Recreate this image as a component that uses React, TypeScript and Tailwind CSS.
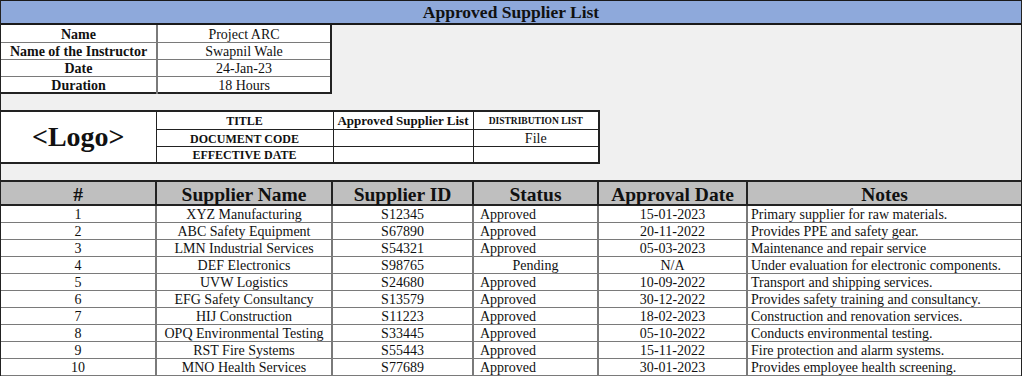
import React from "react";

const info = [
  { label: "Name", value: "Project ARC" },
  { label: "Name of the Instructor", value: "Swapnil Wale" },
  { label: "Date", value: "24-Jan-23" },
  { label: "Duration", value: "18 Hours" },
];

const suppliers = [
  { no: 1, name: "XYZ Manufacturing", id: "S12345", status: "Approved", date: "15-01-2023", notes: "Primary supplier for raw materials." },
  { no: 2, name: "ABC Safety Equipment", id: "S67890", status: "Approved", date: "20-11-2022", notes: "Provides PPE and safety gear." },
  { no: 3, name: "LMN Industrial Services", id: "S54321", status: "Approved", date: "05-03-2023", notes: "Maintenance and repair service" },
  { no: 4, name: "DEF Electronics", id: "S98765", status: "Pending", date: "N/A", notes: "Under evaluation for electronic components." },
  { no: 5, name: "UVW Logistics", id: "S24680", status: "Approved", date: "10-09-2022", notes: "Transport and shipping services." },
  { no: 6, name: "EFG Safety Consultancy", id: "S13579", status: "Approved", date: "30-12-2022", notes: "Provides safety training and consultancy." },
  { no: 7, name: "HIJ Construction", id: "S11223", status: "Approved", date: "18-02-2023", notes: "Construction and renovation services." },
  { no: 8, name: "OPQ Environmental Testing", id: "S33445", status: "Approved", date: "05-10-2022", notes: "Conducts environmental testing." },
  { no: 9, name: "RST Fire Systems", id: "S55443", status: "Approved", date: "15-11-2022", notes: "Fire protection and alarm systems." },
  { no: 10, name: "MNO Health Services", id: "S77689", status: "Approved", date: "30-01-2023", notes: "Provides employee health screening." },
];

export default function App() {
  return (
    <div className="w-[1024px] h-[376px] overflow-hidden bg-white font-['Liberation_Serif',serif] text-[14px] leading-[12px] text-[#111]">
      <div className="w-[1022px] h-[376px] bg-[#f0f0f0] border-x border-b-2 border-[#222] flex flex-col">
        {/* title bar */}
        <div className="h-[25px] shrink-0 bg-[#8ea9db] border-t border-b-2 border-[#1a1a1a] flex items-center justify-center font-bold text-[17.5px]">
          Approved Supplier List
        </div>

        {/* course info */}
        <table className="w-[331px] border-collapse bg-white border-r-2 border-b-2 border-[#222]">
          <tbody>
            {info.map((r) => (
              <tr key={r.label} className="h-[17px]">
                <td className="w-[156px] p-0 pt-[3px] text-center font-bold border-b border-r-2 border-[#7a7a7a]">{r.label}</td>
                <td className="p-0 pt-[3px] text-center border-b border-[#7a7a7a]">{r.value}</td>
              </tr>
            ))}
          </tbody>
        </table>

        {/* document header */}
        <table className="mt-[16px] w-[599px] border-collapse bg-white border-2 border-l-0 border-[#222]">
          <tbody>
            <tr className="h-[18px]">
              <td rowSpan={3} className="w-[155px] p-0 text-center font-bold text-[28px] leading-none border-r border-[#222]">
                &lt;Logo&gt;
              </td>
              <td className="w-[177px] p-0 pt-[2px] text-center font-bold text-[12px] border-r border-b border-[#222]">TITLE</td>
              <td className="w-[140px] p-0 pt-[2px] text-center font-bold text-[13px] border-r border-b border-[#222]">Approved Supplier List</td>
              <td className="p-0 pt-[2px] text-center font-bold text-[9.5px] border-b border-[#222]">DISTRIBUTION LIST</td>
            </tr>
            <tr className="h-[17px]">
              <td className="p-0 pt-[2px] text-center font-bold text-[12px] border-r border-b border-[#222]">DOCUMENT CODE</td>
              <td className="p-0 border-r border-b border-[#222]"></td>
              <td className="p-0 pt-[2px] text-center border-b border-[#222]">File</td>
            </tr>
            <tr className="h-[17px]">
              <td className="p-0 pt-[2px] text-center font-bold text-[12px] border-r border-[#222]">EFFECTIVE DATE</td>
              <td className="p-0 border-r border-[#222]"></td>
              <td className="p-0"></td>
            </tr>
          </tbody>
        </table>

        {/* supplier table */}
        <table className="mt-[16px] w-full border-collapse bg-white border-t-2 border-[#222] table-fixed">
          <colgroup>
            <col className="w-[155px]" />
            <col className="w-[176px]" />
            <col className="w-[141px]" />
            <col className="w-[125px]" />
            <col className="w-[149px]" />
            <col />
          </colgroup>
          <thead>
            <tr className="h-[24px] bg-[#bfbfbf] text-[19.5px] leading-[17px] font-bold">
              <th className="p-0 pt-[2px] border-r-2 border-b-2 border-[#222]">#</th>
              <th className="p-0 pt-[2px] border-r-2 border-b-2 border-[#222]">Supplier Name</th>
              <th className="p-0 pt-[2px] border-r-2 border-b-2 border-[#222]">Supplier ID</th>
              <th className="p-0 pt-[2px] border-r-2 border-b-2 border-[#222]">Status</th>
              <th className="p-0 pt-[2px] border-r-2 border-b-2 border-[#222]">Approval Date</th>
              <th className="p-0 pt-[2px] border-b-2 border-[#222]">Notes</th>
            </tr>
          </thead>
          <tbody>
            {suppliers.map((s) => (
              <tr key={s.no} className="h-[17px]">
                <td className="p-0 pt-[3px] text-center border-r-2 border-b border-[#7a7a7a]">{s.no}</td>
                <td className="p-0 pt-[3px] text-center border-r-2 border-b border-[#7a7a7a]">{s.name}</td>
                <td className="p-0 pt-[3px] text-center border-r-2 border-b border-[#7a7a7a]">{s.id}</td>
                <td className={`p-0 pt-[3px] border-r-2 border-b border-[#7a7a7a] ${s.status === "Pending" ? "text-center" : "text-left pl-[6px]"}`}>
                  {s.status}
                </td>
                <td className="p-0 pt-[3px] text-center border-r-2 border-b border-[#7a7a7a]">{s.date}</td>
                <td className="p-0 pt-[3px] pl-[3px] text-left border-b border-[#7a7a7a]">{s.notes}</td>
              </tr>
            ))}
          </tbody>
        </table>
      </div>
    </div>
  );
}
